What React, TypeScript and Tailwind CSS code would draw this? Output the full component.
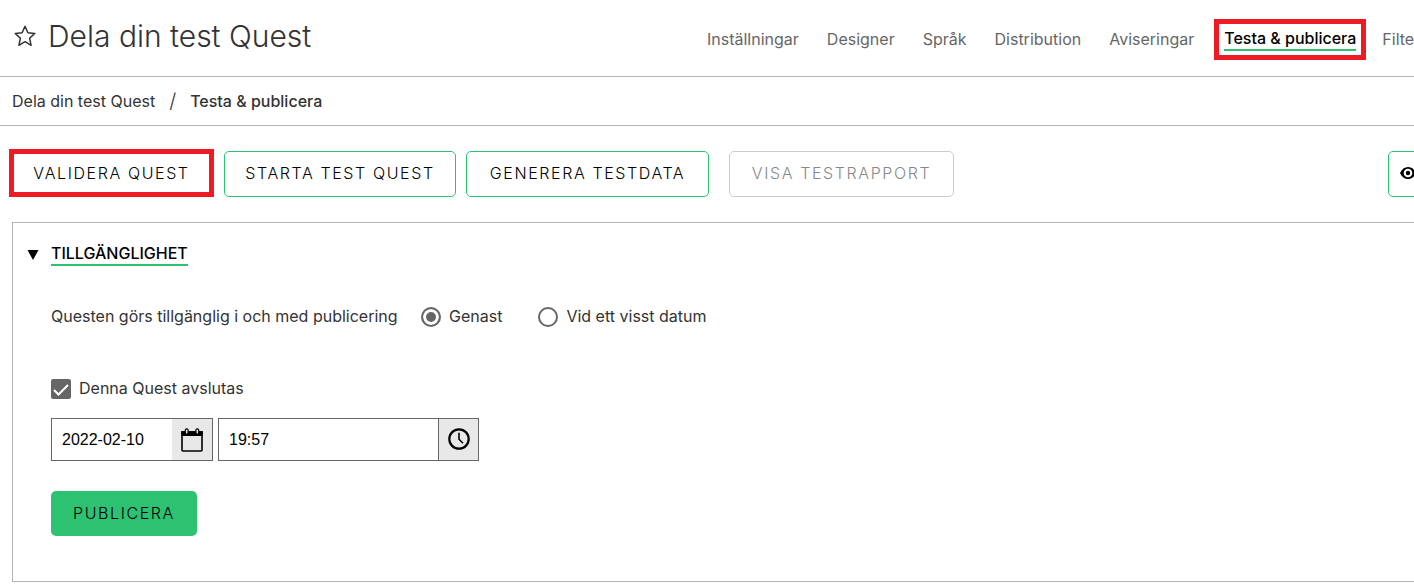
import { useState } from 'react';

type NavItem = {
  label: string;
  active?: boolean;
};

const navItems: NavItem[] = [
  { label: 'Inställningar' },
  { label: 'Designer' },
  { label: 'Språk' },
  { label: 'Distribution' },
  { label: 'Aviseringar' },
  { label: 'Testa & publicera', active: true },
  { label: 'Filter' },
];

const buttonBase = 'h-[46px] shrink-0 whitespace-nowrap rounded-[5px] border pb-0.5 font-light tracking-widest uppercase';

function StarIcon() {
  return (
    <svg viewBox="0 0 22 22" className="h-[22px] w-[22px]" fill="none" stroke="#333" strokeWidth="1.5" strokeLinejoin="round">
      <path d="M11 1.2 13.9 7.700 20.8 8.400 15.600 13.200 17.100 20.300 11 16.700 4.900 20.300 6.400 13.200 1.200 8.400 8.100 7.700Z" />
    </svg>
  );
}

function EyeIcon() {
  return (
    <svg viewBox="0 0 16 12" className="h-3 w-4">
      <path d="M0 6C1.8 2 4.6 0 8 0s6.200 2 8 6c-1.800 4-4.600 6-8 6S1.800 10 0 6Z" />
      <circle cx="8" cy="6" r="4.300" fill="#fff" />
      <circle cx="8" cy="6" r="2.200" />
    </svg>
  );
}

function CalendarIcon() {
  return (
    <svg viewBox="0 0 22 24" className="h-6 w-[22px]">
      <path d="M1 4h20v18a1 1 0 0 1-1 1H2a1 1 0 0 1-1-1Z" fill="none" stroke="#000" strokeWidth="1.600" />
      <path d="M.2 3.200h21.600V8H.2Z" />
      <rect x="4.300" y=".8" width="2.800" height="5.400" rx="1.400" fill="#e8e8e8" stroke="#000" strokeWidth="1.200" />
      <rect x="14.900" y=".8" width="2.800" height="5.400" rx="1.400" fill="#e8e8e8" stroke="#000" strokeWidth="1.200" />
    </svg>
  );
}

function ClockIcon() {
  return (
    <svg viewBox="0 0 22 22" className="h-[22px] w-[22px]" fill="none" stroke="#000">
      <circle cx="11" cy="11" r="9.700" strokeWidth="2.200" />
      <path d="M11 4.800v6.400l4 4" strokeWidth="1.600" />
    </svg>
  );
}

type RadioOptionProps = {
  label: string;
  checked: boolean;
  onChange: () => void;
};

function RadioOption({ label, checked, onChange }: RadioOptionProps) {
  return (
    <label className="flex items-center gap-2">
      <input
        type="radio"
        name="availability"
        checked={checked}
        onChange={onChange}
        className="mt-0.5 h-5 w-5 appearance-none rounded-full border-2 border-[#666] bg-white checked:bg-[#666] checked:shadow-[inset_0_0_0_3px_white]"
      />
      {label}
    </label>
  );
}

export default function App() {
  const [immediate, setImmediate] = useState(true);
  const [ends, setEnds] = useState(true);
  const [date, setDate] = useState('2022-02-10');
  const [time, setTime] = useState('19:57');

  return (
    <div className="overflow-hidden bg-white font-['Inter',sans-serif] text-base text-[#333]">
      <header className="grid h-[77px] grid-cols-2 items-center border-b border-[#b5b5b5]">
        <div className="flex items-center gap-3 pb-1 pl-3.5">
          <button type="button" aria-label="Favorit">
            <StarIcon />
          </button>
          <h1 className="text-3xl leading-9 font-light whitespace-nowrap">Dela din test Quest</h1>
        </div>
        <nav className="flex items-center gap-7 overflow-hidden pt-0.5 whitespace-nowrap text-[#666]">
          {navItems.map((item) =>
            item.active ? (
              <a key={item.label} href="#" className="-mr-3 -ml-2 border-5 border-[#ed1c24] px-[5px] py-1 font-medium text-black">
                <span className="block border-b-2 border-[#2cc272] leading-[21px]">{item.label}</span>
              </a>
            ) : (
              <a key={item.label} href="#">
                {item.label}
              </a>
            ),
          )}
        </nav>
      </header>

      <nav className="flex h-[49px] items-center gap-3.5 border-b border-[#b5b5b5] px-3" aria-label="Brödsmulor">
        <a href="#">Dela din test Quest</a>
        <span className="text-xl leading-6 font-light">/</span>
        <span className="font-medium">Testa &amp; publicera</span>
      </nav>

      <div className="flex items-end pt-[23px] pl-[9px] text-black">
        <button type="button" className="h-12 w-[205px] shrink-0 border-5 border-[#ed1c24] font-light tracking-widest uppercase">
          Validera Quest
        </button>
        <button type="button" className={`${buttonBase} ml-2.5 w-[232px] border-[#2cc272]`}>
          Starta test Quest
        </button>
        <button type="button" className={`${buttonBase} ml-2.5 w-[243px] border-[#2cc272]`}>
          Generera testdata
        </button>
        <button type="button" disabled className={`${buttonBase} ml-5 w-[225px] border-[#ccc] text-[#888]`}>
          Visa testrapport
        </button>
        <button type="button" aria-label="Förhandsgranska" className={`${buttonBase} -mr-5 ml-auto flex w-[46px] items-center border-[#2cc272] pl-[11px]`}>
          <EyeIcon />
        </button>
      </div>

      <section className="mt-[25px] ml-3 h-[360px] border border-r-0 border-[#b5b5b5] pl-[38px]">
        <h2 className="-ml-6 flex items-center gap-3 pt-5 font-medium text-black">
          <svg viewBox="0 0 12 12" className="h-3 w-3">
            <path d="M.5 1h11L6 11Z" />
          </svg>
          <span className="border-b-2 border-[#2cc272] leading-[21px] uppercase">Tillgänglighet</span>
        </h2>

        <div className="mt-[38px] flex items-center" role="radiogroup" aria-label="Tillgänglighet">
          <span className="w-[370px]">Questen görs tillgänglig i och med publicering</span>
          <RadioOption label="Genast" checked={immediate} onChange={() => setImmediate(true)} />
          <span className="w-9" />
          <RadioOption label="Vid ett visst datum" checked={!immediate} onChange={() => setImmediate(false)} />
        </div>

        <label className="mt-12 flex items-center gap-2">
          <span className="mt-0.5 grid h-5 w-5">
            <input
              type="checkbox"
              checked={ends}
              onChange={(event) => setEnds(event.target.checked)}
              className="col-start-1 row-start-1 h-5 w-5 appearance-none rounded-xs border-2 border-[#666] checked:bg-[#666]"
            />
            {ends && (
              <svg viewBox="0 0 20 20" className="pointer-events-none col-start-1 row-start-1 h-5 w-5">
                <path d="m3 11 4.500 4.500L17 6" fill="none" stroke="#fff" strokeWidth="2" />
              </svg>
            )}
          </span>
          Denna Quest avslutas
        </label>

        <div className="mt-[18px] flex gap-[5px] font-['Liberation_Sans',Arial,sans-serif] text-black">
          <div className="flex h-[43px] w-[162px] border border-[#666]">
            <input
              type="text"
              aria-label="Slutdatum"
              value={date}
              onChange={(event) => setDate(event.target.value)}
              className="min-w-0 flex-1 px-2.5 outline-none"
            />
            <button type="button" aria-label="Välj datum" className="flex w-10 items-center justify-center bg-[#e8e8e8]">
              <CalendarIcon />
            </button>
          </div>
          <div className="flex h-[43px] w-[261px] border border-[#666]">
            <input
              type="text"
              aria-label="Sluttid"
              value={time}
              onChange={(event) => setTime(event.target.value)}
              className="min-w-0 flex-1 px-2.5 outline-none"
            />
            <button type="button" aria-label="Välj tid" className="flex w-10 items-center justify-center border-l border-[#666] bg-[#e8e8e8] pb-0.5">
              <ClockIcon />
            </button>
          </div>
        </div>

        <button type="button" className="mt-[30px] h-[45px] w-[146px] rounded-[5px] bg-[#2cc272] pb-0.5 font-light tracking-widest text-black uppercase">
          Publicera
        </button>
      </section>
    </div>
  );
}
